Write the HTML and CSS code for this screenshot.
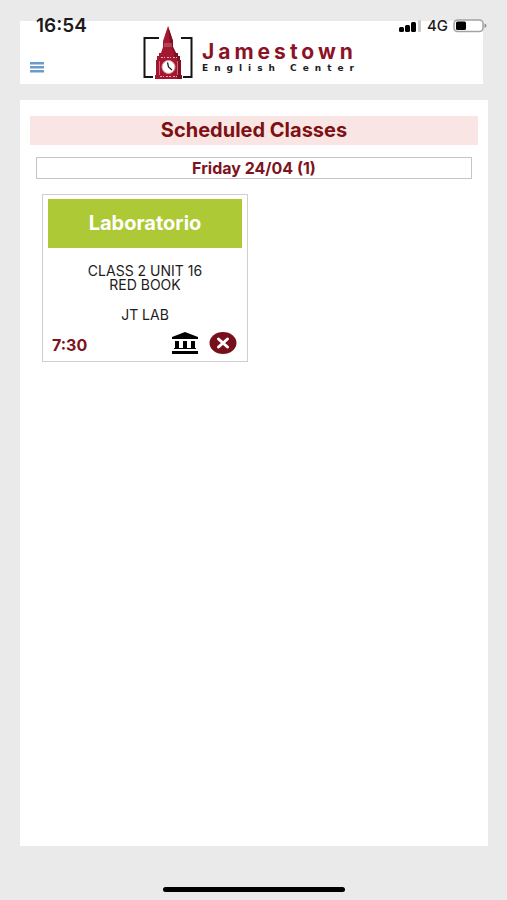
FILE: index.html
```html
<!DOCTYPE html>
<html lang="en">
<head>
<meta charset="utf-8">
<meta name="viewport" content="width=device-width, initial-scale=1">
<title>Jamestown English Center</title>
<link rel="stylesheet" href="styles.css">
</head>
<body>
<div class="status">
  <time class="clock">16:54</time>
  <div class="signals">
    <svg width="23" height="12" viewBox="0 0 23 12" aria-hidden="true">
      <rect x="0" y="7" width="5" height="5" rx="1.500"/>
      <rect x="6" y="5" width="5" height="7" rx="1.500"/>
      <rect x="12" y="2" width="5" height="10" rx="1.500"/>
      <rect x="19" y="0" width="3" height="12" rx="1" fill="#c9c9c9"/>
    </svg>
    <span class="network">4G</span>
    <svg width="34" height="14" viewBox="0 0 34 14" aria-hidden="true">
      <rect x="1" y="1" width="29" height="11.5" rx="3.5" fill="#fff" stroke="#a3a3a3" stroke-width="1.5"/>
      <rect x="3" y="2.5" width="10" height="8.5" rx="1.5"/>
      <path d="M31.5 4.5q2 .6 2 2.2t-2 2.2z" fill="#8d8d8d"/>
    </svg>
  </div>
</div>
<header class="header">
  <button class="menu" type="button" aria-label="Menu">
    <svg width="14" height="12" viewBox="0 0 14 12" fill="#6a9ccb" aria-hidden="true">
      <rect y="1" width="14" height="2.500"/><rect y="5" width="14" height="2.500"/><rect y="9" width="14" height="2.500"/>
    </svg>
  </button>
  <a class="brand" href="#">
    <svg width="51" height="56" viewBox="0 0 51 56" aria-hidden="true">
      <path d="M16 13H1.500V52H10M38 13H48.500V52H40" fill="none" stroke="#151515" stroke-width="2"/>
      <path d="M25 1L30 16V22L33 28H35V31H37V35H38V50H39V54H12V50H13V35H14V31H16V28H18L20 22V16Z" fill="#a31830"/>
      <path d="M25 1L30 16V22L33 28H35V31H37V35H38V50H39V54H34V33H31V28L27 18Z" fill="#7f1023"/>
      <path d="M22 18v4M24 18v4M26 18v4M28 18v4" stroke="#e2a7b0" stroke-width=".6"/>
      <path d="M18 32.500h4M24 32.500h4M30 32.500h4M17 51.500h4M23 51.500h5M30 51.500h4" stroke="#e4adb5" stroke-width="1.200" stroke-dasharray="2 1"/>
      <path d="M16.500 36V50M34.500 36V50" stroke="#cf6877"/>
      <circle cx="25.500" cy="42" r="6.500" fill="#fff" stroke="#d9a1a8"/>
      <path d="M24.500 37.500L25.500 42L29 45" fill="none" stroke="#222" stroke-width="1.300"/>
    </svg>
    <span class="brand-text">
      <span class="brand-name">Jamestown</span>
      <span class="brand-sub">English Center</span>
    </span>
  </a>
</header>
<main class="panel">
  <h1 class="title">Scheduled Classes</h1>
  <h2 class="day">Friday 24/04 (1)</h2>
  <article class="card">
    <h3 class="card-title">Laboratorio</h3>
    <p class="lesson">CLASS 2 UNIT 16<br>RED BOOK</p>
    <p class="room">JT LAB</p>
    <div class="card-foot">
      <time class="hour">7:30</time>
      <svg width="28" height="24" viewBox="0 0 28 24" aria-hidden="true">
        <path d="M14 1L27 6V8H1V6ZM4 10H8V18H4ZM12 10H16V18H12ZM20 10H24V18H20ZM3 17H25V18H3ZM1 20H27V23H1Z"/>
      </svg>
      <button class="cancel" type="button" aria-label="Cancel class">
        <svg width="28" height="24" viewBox="0 0 28 24" aria-hidden="true">
          <ellipse cx="14" cy="12" rx="13.500" ry="11" fill="#78101c"/>
          <path d="M9.500 8L18.500 16M18.500 8L9.500 16" stroke="#fff" stroke-width="3" stroke-linecap="round"/>
        </svg>
      </button>
    </div>
  </article>
</main>
<div class="home-bar"></div>
</body>
</html>
```
FILE: styles.css
```css
* { box-sizing: border-box; }
body {
  margin: 0;
  min-height: 100vh;
  padding: 21px 19px 8px 20px;
  display: flex;
  flex-direction: column;
  background: #eaeaea;
  color: #1c1c1c;
  font-family: Inter, "Liberation Sans", sans-serif;
}
h1, h2, h3, p { margin: 0; }
button { padding: 0; border: 0; background: none; cursor: pointer; }
svg { display: block; flex: none; }

.status {
  position: absolute;
  top: 16px;
  left: 36px;
  right: 20px;
  height: 20px;
  display: flex;
  align-items: center;
  justify-content: space-between;
}
.clock { font-size: 19px; font-weight: 600; line-height: 20px; }
.signals { display: flex; align-items: center; gap: 5px; }
.network { font-size: 15px; font-weight: 500; line-height: 20px; }

.header {
  height: 63px;
  margin-right: 5px;
  padding: 4px 10px 0;
  display: grid;
  grid-template-columns: 1fr auto 1fr;
  background: #fff;
}
.menu { align-self: end; justify-self: start; margin-bottom: 11px; }
.brand { display: flex; gap: 8px; text-decoration: none; }
.brand-text { display: flex; flex-direction: column; padding-top: 16px; }
.brand-name {
  color: #8c1226;
  font-size: 21px;
  font-weight: 700;
  line-height: 22px;
  letter-spacing: 4px;
}
.brand-sub {
  color: #1c1c1c;
  font: 700 9px/10px "DejaVu Sans", sans-serif;
  letter-spacing: 6px;
  white-space: nowrap;
}

.panel {
  flex: 1;
  margin: 16px 0 41px;
  padding: 16px 10px;
  background: #fff;
}
.title {
  background: #f9e5e4;
  color: #7d1013;
  font-size: 20px;
  font-weight: 700;
  line-height: 29px;
  text-align: center;
}
.day {
  margin: 12px 6px 15px;
  border: 1px solid #c4c4c4;
  color: #7d1420;
  font-size: 16px;
  font-weight: 700;
  line-height: 20px;
  text-align: center;
}
.card {
  width: 206px;
  margin-left: 12px;
  padding: 4px 5px 6px;
  border: 1px solid #cfcfcf;
  font-size: 14px;
  line-height: 14px;
  text-align: center;
}
.card-title {
  margin-bottom: 16px;
  background: #adc935;
  color: #fff;
  font-size: 20px;
  font-weight: 700;
  line-height: 49px;
}
.room { margin: 16px 0 9px; }
.card-foot { display: flex; align-items: center; gap: 10px; padding: 0 5px 0 4px; }
.hour { align-self: end; margin-right: auto; color: #7d1420; font-size: 16px; font-weight: 700; line-height: 20px; }

.home-bar {
  width: 182px;
  height: 5px;
  margin: 0 auto;
  border-radius: 3px;
  background: #000;
}
```
